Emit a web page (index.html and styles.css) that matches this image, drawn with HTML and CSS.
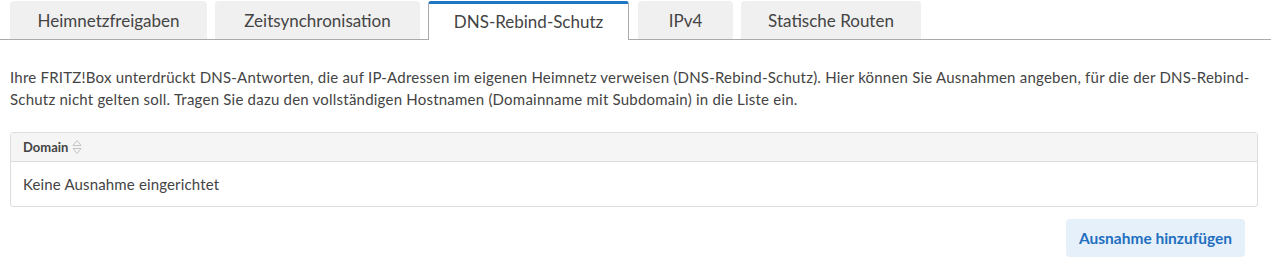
FILE: index.html
```html
<!DOCTYPE html>
<html lang="de">
<head>
    <meta charset="UTF-8">
    <title>DNS-Rebind-Schutz</title>
    <link rel="stylesheet" href="styles.css">
</head>
<body>
    <div class="tabs">
        <a class="tab">Heimnetzfreigaben</a>
        <a class="tab">Zeitsynchronisation</a>
        <a class="tab active">DNS-Rebind-Schutz</a>
        <a class="tab">IPv4</a>
        <a class="tab">Statische Routen</a>
    </div>

    <div class="content">
        <p class="intro">Ihre FRITZ!Box unterdrückt DNS-Antworten, die auf IP-Adressen im eigenen Heimnetz verweisen (DNS-Rebind-Schutz). Hier können Sie Ausnahmen angeben, für die der DNS-Rebind-Schutz nicht gelten soll. Tragen Sie dazu den vollständigen Hostnamen (Domainname mit Subdomain) in die Liste ein.</p>

        <div class="table">
            <div class="table-head">
                <span>Domain</span>
                <svg class="sort" width="10" height="16" viewBox="0 0 10 16">
                    <path d="M5 1.5 L9 6.5 H1 Z" fill="none" stroke="#c4c4c4" stroke-width="1"/>
                    <path d="M5 14.5 L9 9.5 H1 Z" fill="none" stroke="#c4c4c4" stroke-width="1"/>
                </svg>
            </div>
            <div class="table-row">Keine Ausnahme eingerichtet</div>
        </div>

        <div class="actions">
            <button class="btn">Ausnahme hinzufügen</button>
        </div>
    </div>
</body>
</html>
```

FILE: styles.css
```css
body {
    margin: 0;
    font-family: Lato, "Open Sans", sans-serif;
    color: #444;
    background: #fff;
}
.tabs {
    display: flex;
    gap: 8px;
    padding: 1px 0 0 10px;
    border-bottom: 1px solid #aaa;
    height: 38px;
}
.tab {
    box-sizing: border-box;
    display: flex;
    align-items: center;
    justify-content: center;
    white-space: nowrap;
    background: #f0f0f0;
    border-radius: 4px 4px 0 0;
    font-size: 17px;
    color: #444;
}
.tab:nth-child(1) { width: 197px; }
.tab:nth-child(2) { width: 205px; }
.tab:nth-child(3) { width: 201px; }
.tab:nth-child(4) { width: 95px; margin-left: 1px; }
.tab:nth-child(5) { width: 180px; }
.tab.active {
    background: #fff;
    border: 1px solid #aaa;
    border-top: 3px solid #1f76c4;
    border-bottom: none;
    margin-bottom: -1px;
    padding-bottom: 2px;
    border-radius: 3px 3px 0 0;
}
.content {
    padding: 0 13px 0 10px;
}
.intro {
    margin: 26px 0 22px;
    font-size: 15px;
    line-height: 22px;
    letter-spacing: 0.22px;
}
.table {
    border: 1px solid #ddd;
    border-radius: 3px;
}
.table-head {
    display: flex;
    align-items: center;
    gap: 4px;
    height: 28px;
    padding: 0 12px;
    background: #f5f5f5;
    border-bottom: 1px solid #ddd;
    font-size: 13px;
    font-weight: bold;
}
.table-row {
    height: 44px;
    line-height: 44px;
    padding: 0 12px;
    font-size: 15px;
    letter-spacing: 0.15px;
}
.actions {
    display: flex;
    justify-content: flex-end;
    padding: 12px 13px 0 0;
}
.btn {
    font-family: inherit;
    font-size: 15.5px;
    font-weight: bold;
    color: #1f6fbf;
    background: #e6f0fa;
    border: none;
    border-radius: 4px;
    width: 179px;
    height: 38px;
    padding: 0;
}
```
